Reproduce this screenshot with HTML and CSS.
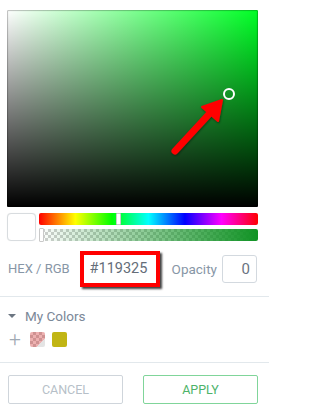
FILE: index.html
```html
<!DOCTYPE html>
<html>
<head>
<meta charset="utf-8">
<link rel="stylesheet" href="styles.css">
</head>
<body>
<div class="picker">
  <div class="top">
    <div class="sv">
      <span class="ring"></span>
      <svg class="arrow" width="251" height="197" viewBox="0 0 251 197">
        <g filter="url(#sh)">
          <line x1="168" y1="141" x2="204" y2="102" stroke="#ff0000" stroke-width="7" stroke-linecap="round"/>
          <polygon points="215,90 195,97 211,111" fill="#ff0000" stroke="#ff0000" stroke-width="2" stroke-linejoin="round"/>
        </g>
        <defs>
          <filter id="sh" x="-20%" y="-20%" width="140%" height="140%">
            <feDropShadow dx="0.5" dy="1" stdDeviation="0.8" flood-color="#000" flood-opacity="0.5"/>
          </filter>
        </defs>
      </svg>
    </div>
    <div class="sliders">
      <div class="swatch"></div>
      <div class="bars">
        <div class="bar hue"><span class="handle hue-handle"></span></div>
        <div class="bar alpha"><span class="handle alpha-handle"></span></div>
      </div>
    </div>
    <div class="hexrow">
      <span class="label">HEX / RGB</span>
      <div class="hexbox"><span class="hexval">#119325</span></div>
      <span class="label op">Opacity</span>
      <div class="opbox">0</div>
    </div>
  </div>
  <div class="divider"></div>
  <div class="mycolors">
    <div class="mc-head"><span class="tri"></span><span class="mc-title">My Colors</span></div>
    <div class="mc-row">
      <span class="plus">+</span>
      <span class="chip chip-pink"></span>
      <span class="chip chip-olive"></span>
    </div>
  </div>
  <div class="divider"></div>
  <div class="actions">
    <button class="btn cancel">CANCEL</button>
    <button class="btn apply">APPLY</button>
  </div>
</div>
</body>
</html>
```

FILE: styles.css
```css
html, body {
  margin: 0;
  padding: 0;
  background: #fff;
  font-family: Roboto, "Liberation Sans", sans-serif;
}
.picker {
  width: 269px;
}
.top {
  padding: 10px 11px 0 7px;
}
.sv {
  position: relative;
  height: 197px;
  background:
    linear-gradient(to top, #000, rgba(0,0,0,0)),
    linear-gradient(to right, #fff, rgba(255,255,255,0)),
    hsl(129, 100%, 50%);
  box-shadow: inset 0 0 1px 1px rgba(0,0,0,0.25);
  border-radius: 1px;
}
.ring {
  position: absolute;
  left: 216px;
  top: 78px;
  width: 8px;
  height: 8px;
  border: 2px solid #fff;
  border-radius: 50%;
}
.arrow {
  position: absolute;
  left: 0;
  top: 0;
}
.sliders {
  display: flex;
  gap: 3px;
  margin-top: 6px;
}
.swatch {
  width: 27px;
  height: 26px;
  border: 1px solid #d8dcdf;
  border-radius: 4px;
  background: #fff;
  box-shadow: 0 0 1px rgba(0,0,0,0.1);
}
.bars {
  flex: 1;
  display: flex;
  flex-direction: column;
  gap: 4px;
}
.bar {
  position: relative;
  height: 12px;
  border-radius: 2px;
}
.hue {
  background: linear-gradient(to right, #f00, #ff0 16.6%, #0f0 33.3%, #0ff 50%, #00f 66.6%, #f0f 83.3%, #f00);
}
.alpha {
  background:
    linear-gradient(to right, rgba(17,147,37,0), rgb(17,147,37)),
    repeating-conic-gradient(#d0d0d0 0 25%, #fff 0 50%) 0 0 / 6px 6px;
}
.handle {
  position: absolute;
  top: 0;
  width: 3px;
  height: 10px;
  background: #fff;
  border: 1px solid #c9c9c9;
  border-radius: 1px;
}
.hue-handle {
  left: 77px;
}
.alpha-handle {
  left: 0;
  top: -1px;
  height: 12px;
}
.hexrow {
  display: flex;
  align-items: center;
  height: 39px;
  margin-top: 8px;
}
.label {
  font-size: 13px;
  color: #8796a6;
  margin-left: 1px;
  white-space: nowrap;
}
.hexbox {
  margin-left: 10px;
  width: 72px;
  height: 28px;
  border: 4px solid #ff0000;
  box-shadow: 2px 2px 2px rgba(0,0,0,0.75);
  background: #fff;
  display: flex;
  align-items: center;
}
.hexval {
  font-size: 14.5px;
  color: #646d78;
  margin-left: 6px;
}
.op {
  margin-left: 12px;
  font-size: 13.5px;
}
.opbox {
  margin-left: 5px;
  height: 26px;
  border: 1.5px solid #d3d9df;
  border-radius: 3px;
  font-size: 15px;
  color: #6a7380;
  text-align: right;
  padding-right: 6px;
  line-height: 26px;
  box-sizing: content-box;
  width: 27px;
}
.divider {
  height: 1px;
  background: #e2e8ec;
}
.top + .divider {
  margin-top: 8px;
}
.mycolors {
  padding: 11px 11px 15px 8px;
}
.mc-head {
  display: flex;
  align-items: center;
  height: 16px;
}
.tri {
  width: 0;
  height: 0;
  border-left: 4px solid transparent;
  border-right: 4px solid transparent;
  border-top: 4px solid #6c7682;
  margin-right: 9px;
}
.mc-title {
  font-size: 13.5px;
  color: #7b8898;
}
.mc-row {
  display: flex;
  align-items: center;
  margin-top: 7px;
  height: 16px;
}
.plus {
  font-size: 21px;
  font-weight: 300;
  color: #a0aab4;
  line-height: 16px;
  width: 14px;
  margin-left: 1px;
}
.chip {
  width: 15px;
  height: 15px;
  border-radius: 2px;
}
.chip-pink {
  margin-left: 7px;
  background:
    linear-gradient(135deg, rgba(0,0,0,0) 72%, #e4e4e4 72%),
    linear-gradient(rgba(215,80,80,0.45), rgba(215,80,80,0.45)),
    repeating-conic-gradient(#c8c8c8 0 25%, #fff 0 50%) 0 0 / 6px 6px;
}
.chip-olive {
  margin-left: 7px;
  background: #c1b514;
}
.actions {
  display: flex;
  justify-content: space-between;
  padding: 12px 11px 0 8px;
}
.btn {
  width: 115px;
  height: 29px;
  background: #fff;
  border-radius: 2px;
  font-family: Roboto, "Liberation Sans", sans-serif;
  font-size: 12.5px;
  padding: 0;
}
.cancel {
  border: 1.5px solid #cfd5db;
  color: #b6bfc8;
}
.apply {
  border: 1.5px solid #80d59a;
  color: #4db36a;
}
```
